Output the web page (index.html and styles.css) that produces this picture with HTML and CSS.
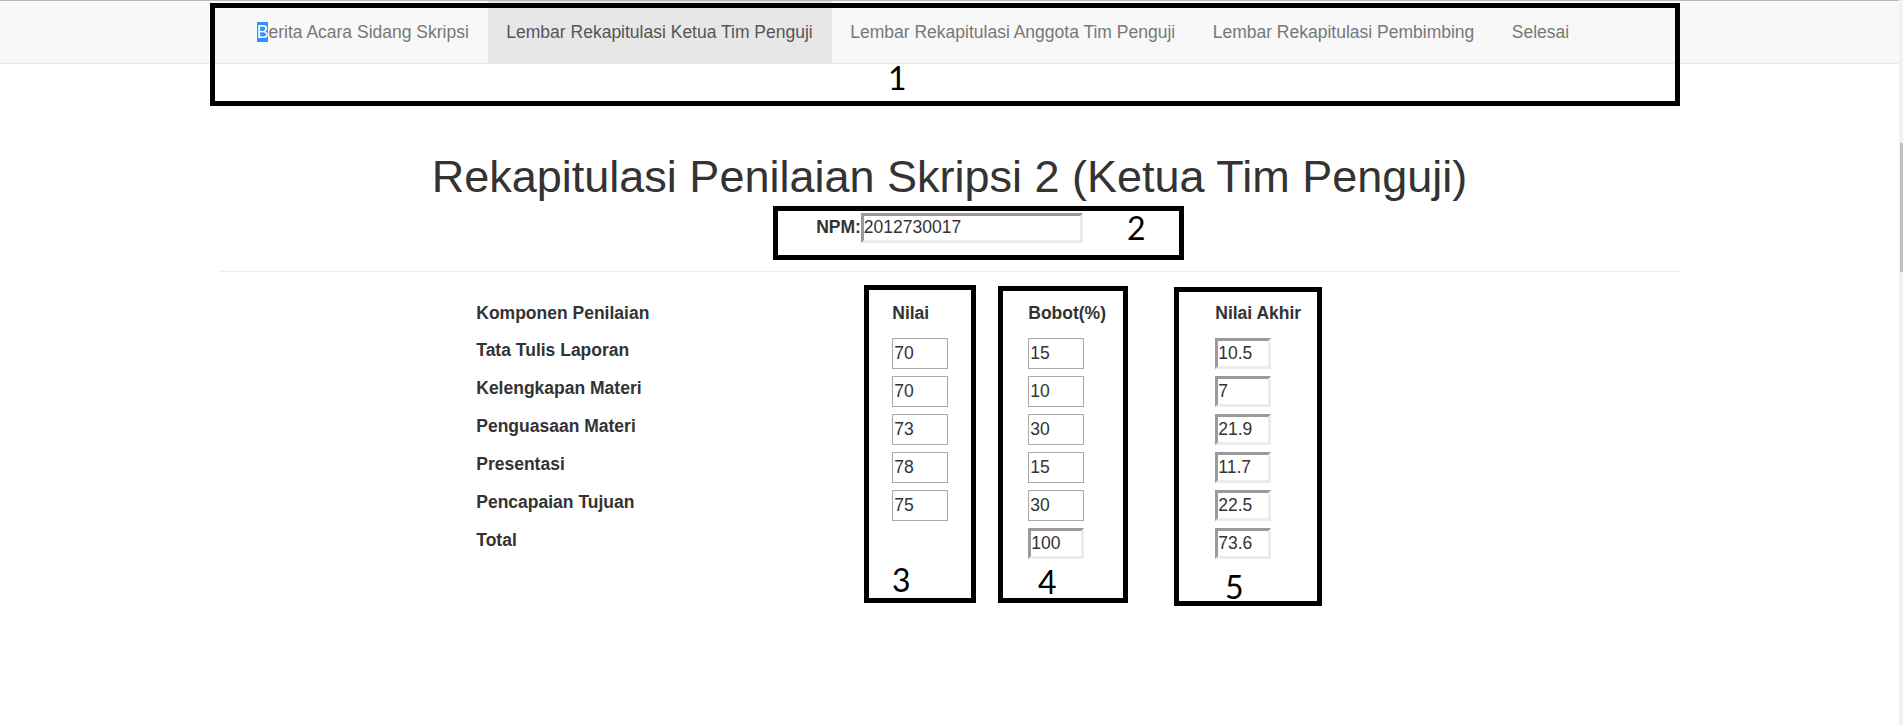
FILE: index.html
```html
<!DOCTYPE html>
<html lang="id">
<head>
    <meta charset="UTF-8">
    <meta name="viewport" content="width=device-width, initial-scale=1.0">
    <title>Rekapitulasi Penilaian Skripsi 2 (Ketua Tim Penguji)</title>
    <link rel="stylesheet" href="styles.css">
</head>
<body>

    <div class="page">

        <!-- Navigation Menu Bar -->
        <nav class="navbar">
            <div class="container">
                <ul class="nav">
                    <li><a href="#"><span class="sel">B</span>erita Acara Sidang Skripsi</a></li>
                    <li class="active"><a href="#">Lembar Rekapitulasi Ketua Tim Penguji</a></li>
                    <li><a href="#">Lembar Rekapitulasi Anggota Tim Penguji</a></li>
                    <li><a href="#">Lembar Rekapitulasi Pembimbing</a></li>
                    <li><a href="#">Selesai</a></li>
                </ul>
            </div>
        </nav>

        <!-- Content Section -->
        <div class="container">
            <h1>Rekapitulasi Penilaian Skripsi 2 (Ketua Tim Penguji)</h1>
            <div class="npm-row">
                <label for="npm">NPM:</label>
                <input class="inp-ro npm" id="npm" type="text" value="2012730017" readonly>
            </div>
            <hr>

            <!-- Score Table -->
            <div class="score-grid">
                <div class="head">Komponen Penilaian</div>
                <div class="head">Nilai</div>
                <div class="head">Bobot(%)</div>
                <div class="head">Nilai Akhir</div>

                <div class="label">Tata Tulis Laporan</div>
                <div><input class="inp" type="text" value="70"></div>
                <div><input class="inp" type="text" value="15"></div>
                <div><input class="inp-ro" type="text" value="10.5" readonly></div>

                <div class="label">Kelengkapan Materi</div>
                <div><input class="inp" type="text" value="70"></div>
                <div><input class="inp" type="text" value="10"></div>
                <div><input class="inp-ro" type="text" value="7" readonly></div>

                <div class="label">Penguasaan Materi</div>
                <div><input class="inp" type="text" value="73"></div>
                <div><input class="inp" type="text" value="30"></div>
                <div><input class="inp-ro" type="text" value="21.9" readonly></div>

                <div class="label">Presentasi</div>
                <div><input class="inp" type="text" value="78"></div>
                <div><input class="inp" type="text" value="15"></div>
                <div><input class="inp-ro" type="text" value="11.7" readonly></div>

                <div class="label">Pencapaian Tujuan</div>
                <div><input class="inp" type="text" value="75"></div>
                <div><input class="inp" type="text" value="30"></div>
                <div><input class="inp-ro" type="text" value="22.5" readonly></div>

                <div class="label">Total</div>
                <div></div>
                <div><input class="inp-ro" type="text" value="100" readonly></div>
                <div><input class="inp-ro" type="text" value="73.6" readonly></div>
            </div>
        </div>

        <!-- Annotation marks drawn over the screenshot -->
        <div class="mark box-1"></div>
        <div class="mark box-2"></div>
        <div class="mark box-3"></div>
        <div class="mark box-4"></div>
        <div class="mark box-5"></div>
        <span class="mark-num num-1">1</span>
        <span class="mark-num num-2">2</span>
        <span class="mark-num num-3">3</span>
        <span class="mark-num num-4">4</span>
        <span class="mark-num num-5">5</span>
    </div>

    <!-- Browser scrollbar edge -->
    <div class="scrollbar"><div class="thumb"></div></div>

</body>
</html>
```

FILE: styles.css
```css
html, body {margin: 0;padding: 0;}
body {display: flex;min-height: 100vh;font-family: "Liberation Sans", Arial, sans-serif;font-size: 17.5px;line-height: 1.42857;color: #333;background: #fff;}
*, *::before, *::after {box-sizing: border-box;}
.page {flex: 1;position: relative;}
.container {width: 1462px;margin: 0 auto;padding: 0 18.75px;}

/* navbar */
.navbar {background-color: #f8f8f8;border-top: 1px solid #b9b9b9;border-bottom: 1px solid #e7e7e7;}
.nav {display: flex;list-style: none;margin: 0;padding: 0;}
.nav a {display: block;padding: 19px 18.75px 18px;line-height: 25px;color: #777;text-decoration: none;}
.nav li:first-child a {padding-left: 19.5px;}
.nav .active a {background-color: #e7e7e7;color: #555;}
.nav .sel {background-color: #3390ff;color: #fff;}

/* heading */
h1 {margin: 88px 0 0;font-size: 45px;font-weight: 400;line-height: 1.1;text-align: center;color: #333;}
.npm-row {display: flex;justify-content: center;align-items: baseline;margin-top: 11px;}
.npm-row label {font-weight: 700;}
.npm {width: 222px;height: 30px;}
hr {margin: 28px -18.75px 0;border: 0;border-top: 1px solid #eee;}

/* score table */
.score-grid {display: grid;grid-template-columns: 416px 136px 187px 120px;grid-template-rows: 37px;grid-auto-rows: 38px;margin: 29px 0 0 239px;}
.head, .label {font-weight: 700;}
.inp, .inp-ro {display: block;width: 56px;height: 31px;margin: 0;font-family: "Liberation Sans", Arial, sans-serif;font-size: 17.5px;color: #333;background: #fff;outline: none;}
.inp {border: 1px solid #a9a9a9;padding: 0 1px;}
.inp-ro {border: 3px solid;border-color: #9a9a9a #ececec #ececec #9a9a9a;padding: 0;}
.npm.inp-ro {width: 222px;height: 30px;}

/* annotation marks */
.mark {position: absolute;border: 5px solid #000;}
.box-1 {left: 210px;top: 3px;width: 1470px;height: 103px;}
.box-2 {left: 773px;top: 206px;width: 411px;height: 54px;}
.box-3 {left: 864px;top: 285px;width: 112px;height: 318px;}
.box-4 {left: 998px;top: 286px;width: 130px;height: 317px;}
.box-5 {left: 1174px;top: 287px;width: 148px;height: 319px;}
.mark-num {position: absolute;font-family: Lato, "Open Sans", sans-serif;font-size: 32px;line-height: 1;color: #000;}
.num-1 {left: 888px;top: 62px;}
.num-2 {left: 1127px;top: 212px;}
.num-3 {left: 892px;top: 564px;}
.num-4 {left: 1038px;top: 566px;}
.num-5 {left: 1225px;top: 571px;}

/* scrollbar edge */
.scrollbar {width: 4px;background: #f1f1f1;}
.scrollbar .thumb {width: 3px;height: 129px;margin: 143px 0 0 1px;background: #c1c1c1;}
```
